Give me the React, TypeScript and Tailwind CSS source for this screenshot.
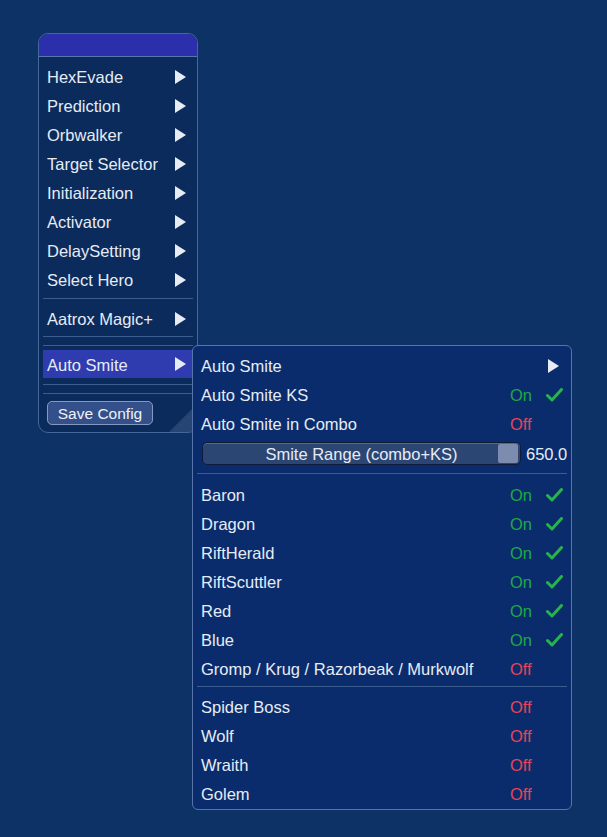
import React from "react";

const font = { fontFamily: '"Liberation Sans", Arial, sans-serif' };

function Arrow() {
  return (
    <svg width="11" height="14" viewBox="0 0 11 14" className="shrink-0">
      <polygon points="0,0 11,7 0,14" fill="#e6ebf4" />
    </svg>
  );
}

function Tick() {
  return (
    <svg width="17" height="14" viewBox="0 0 17 14" className="shrink-0">
      <polyline
        points="1.5,7.5 6,12 15.5,1.5"
        fill="none"
        stroke="#27b44a"
        strokeWidth="3"
        strokeLinecap="round"
        strokeLinejoin="round"
      />
    </svg>
  );
}

const mainItems = [
  "HexEvade",
  "Prediction",
  "Orbwalker",
  "Target Selector",
  "Initialization",
  "Activator",
  "DelaySetting",
  "Select Hero",
];

function MenuRow({ label, active }: { label: string; active?: boolean }) {
  return (
    <div
      className={`flex items-center justify-between pl-[4px] pr-[7px] ${
        active ? "h-[28px] bg-[#2f3cb0]" : "h-[29px]"
      }`}
    >
      <span className="whitespace-nowrap pt-[2px] text-[16.5px] leading-none text-[#e6ecf5]">{label}</span>
      <Arrow />
    </div>
  );
}

function Line({ className = "" }: { className?: string }) {
  return <div className={`h-px bg-[#3c5d8f] ${className}`} />;
}

type Toggle = { label: string; on: boolean };

function ToggleRow({ label, on }: Toggle) {
  return (
    <div className="flex h-[29px] items-center pl-[4px]">
      <span className="flex-1 whitespace-nowrap pt-[2px] text-[16.5px] leading-none text-[#e6ecf5]">{label}</span>
      <div className="flex w-[57px] items-center">
        {on ? (
          <>
            <span className="w-[36px] pt-[2px] text-[16.5px] leading-none text-[#1fa846]">On</span>
            <Tick />
          </>
        ) : (
          <span className="pt-[2px] text-[16.5px] leading-none text-[#e6445a]">Off</span>
        )}
      </div>
    </div>
  );
}

const camps: Toggle[] = [
  { label: "Baron", on: true },
  { label: "Dragon", on: true },
  { label: "RiftHerald", on: true },
  { label: "RiftScuttler", on: true },
  { label: "Red", on: true },
  { label: "Blue", on: true },
  { label: "Gromp / Krug / Razorbeak / Murkwolf", on: false },
];

const bosses: Toggle[] = [
  { label: "Spider Boss", on: false },
  { label: "Wolf", on: false },
  { label: "Wraith", on: false },
  { label: "Golem", on: false },
];

export default function App() {
  return (
    <div className="relative min-h-screen w-full bg-[#0d3366] pl-[38px] pt-[33px]" style={font}>
      {/* main menu window */}
      <div className="relative h-[400px] w-[160px] overflow-hidden rounded-[10px] border border-[#46679a] bg-[#0b2b5c]">
        <div className="h-[23px] border-b border-[#5877ad] bg-[#2b2fab]" />
        <div className="px-[4px] pt-[5px]">
          {mainItems.map((m) => (
            <MenuRow key={m} label={m} />
          ))}
          <Line className="mt-[4px] mb-[5px]" />
          <MenuRow label="Aatrox Magic+" />
          <Line className="mt-[3px]" />
          <Line className="mt-[8px]" />
          <div className="mt-[4px]">
            <MenuRow label="Auto Smite" active />
          </div>
          <Line className="mt-[6px]" />
          <Line className="mt-[8px]" />
          <button className="ml-[4px] mt-[7px] flex h-[24px] w-[106px] items-center justify-center rounded-[5px] border border-[#8798c0] bg-[#34508a] pt-[2px] text-[15.5px] leading-none text-[#eef2f8]">
            Save Config
          </button>
        </div>
        {/* resize grip */}
        <svg width="28" height="28" viewBox="0 0 28 28" className="absolute bottom-0 right-0">
          <polygon points="28,0 28,28 0,28" fill="rgba(160,185,230,0.18)" />
        </svg>
      </div>

      {/* Auto Smite submenu */}
      <div className="absolute left-[192px] top-[345px] h-[465px] w-[380px] rounded-[6px] border border-[#5676ab] bg-[#0a2c6c] px-[4px] pt-[5px]">
        <div className="flex h-[29px] items-center pl-[4px]">
          <span className="flex-1 pt-[2px] text-[16.5px] leading-none text-[#e6ecf5]">Auto Smite</span>
          <div className="flex w-[57px] items-center pl-[38px]">
            <Arrow />
          </div>
        </div>
        <ToggleRow label="Auto Smite KS" on />
        <ToggleRow label="Auto Smite in Combo" on={false} />
        <div className="mt-[4px] flex h-[23px] items-center overflow-hidden">
          <div className="relative ml-[5px] flex h-[23px] w-[319px] shrink-0 items-center justify-center rounded-[5px] border border-[#0f1c38] bg-[#2c4674] shadow-[inset_0_1px_0_rgba(150,175,220,0.35)]">
            <span className="pt-[2px] text-[16.5px] leading-none text-[#e6ecf5]">Smite Range (combo+KS)</span>
            <div className="absolute right-[2px] top-[1px] h-[19px] w-[20px] rounded-[2px] bg-[#7d8bae]" />
          </div>
          <span className="ml-[5px] whitespace-nowrap pt-[2px] text-[16.5px] leading-none text-[#e6ecf5]">650.0</span>
        </div>
        <Line className="mt-[8px] mb-[6px]" />
        {camps.map((c) => (
          <ToggleRow key={c.label} {...c} />
        ))}
        <Line className="mt-[3px] mb-[5px]" />
        {bosses.map((c) => (
          <ToggleRow key={c.label} {...c} />
        ))}
      </div>
    </div>
  );
}
